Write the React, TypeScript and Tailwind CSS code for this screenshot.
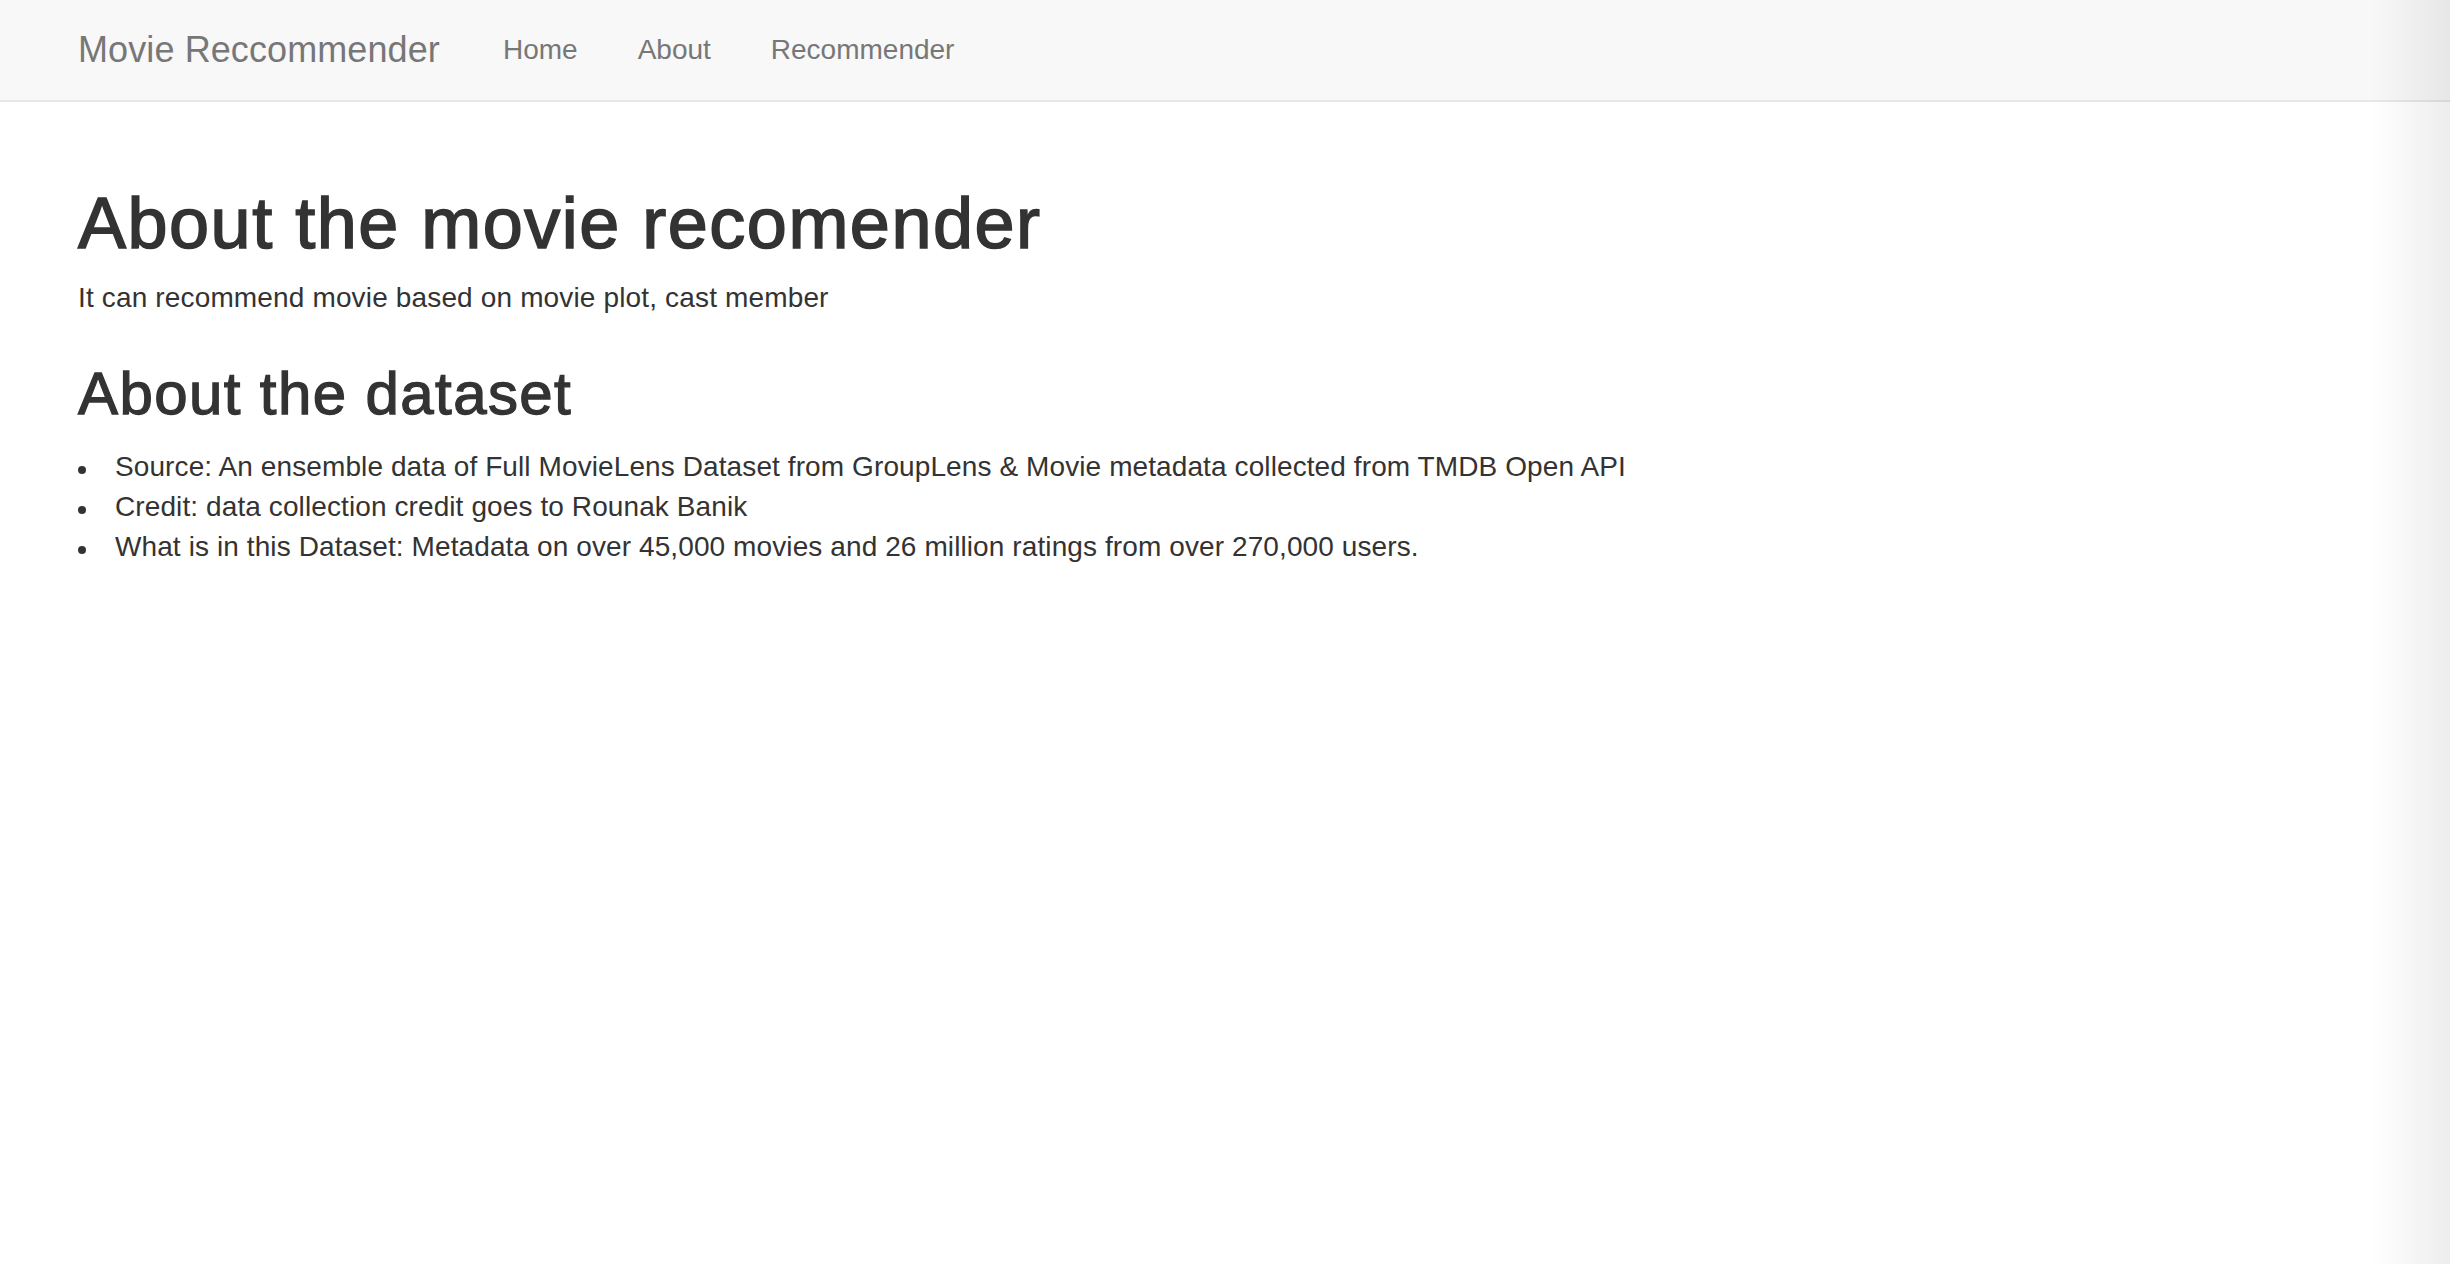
import React from "react";

const font = { fontFamily: '"Liberation Sans", Arial, Helvetica, sans-serif' };

const items = [
  "Source: An ensemble data of Full MovieLens Dataset from GroupLens & Movie metadata collected from TMDB Open API",
  "Credit: data collection credit goes to Rounak Banik",
  "What is in this Dataset: Metadata on over 45,000 movies and 26 million ratings from over 270,000 users.",
];

export default function App() {
  return (
    <div className="relative min-h-[1264px] w-full bg-white text-[#333]" style={font}>
      <nav className="flex h-[102px] items-center border-b-2 border-[#e7e7e7] bg-[#f8f8f8]">
        <a className="pl-[78px] pr-[33px] text-[36px] leading-none tracking-[0.1px] text-[#777]">Movie Reccommender</a>
        <a className="px-[30px] text-[28px] leading-none text-[#777]">Home</a>
        <a className="px-[30px] text-[28px] leading-none text-[#777]">About</a>
        <a className="px-[30px] text-[28px] leading-none text-[#777]">Recommender</a>
      </nav>
      <main className="pl-[78px] pt-[81px]">
        <h1 className="text-[72px] font-medium leading-[80px] tracking-[1.5px] [-webkit-text-stroke:1.6px_#333]">
          About the movie recomender
        </h1>
        <p className="mt-[15px] text-[28px] leading-[40px] tracking-[0.15px]">
          It can recommend movie based on movie plot, cast member
        </p>
        <h2 className="mt-[43px] text-[60px] font-medium leading-[66px] tracking-[1.4px] [-webkit-text-stroke:1.3px_#333]">
          About the dataset
        </h2>
        <ul className="mt-[20px] flex flex-col text-[28px] leading-[40px] tracking-[0.1px]">
          {items.map((t) => (
            <li key={t} className="flex items-start">
              <span className="mt-[19px] h-[8px] w-[8px] shrink-0 rounded-full bg-[#333]" />
              <span className="pl-[29px]">{t}</span>
            </li>
          ))}
        </ul>
      </main>
      <div className="pointer-events-none absolute inset-y-0 right-0 w-[80px] bg-gradient-to-r from-transparent to-black/[0.07]" />
    </div>
  );
}
